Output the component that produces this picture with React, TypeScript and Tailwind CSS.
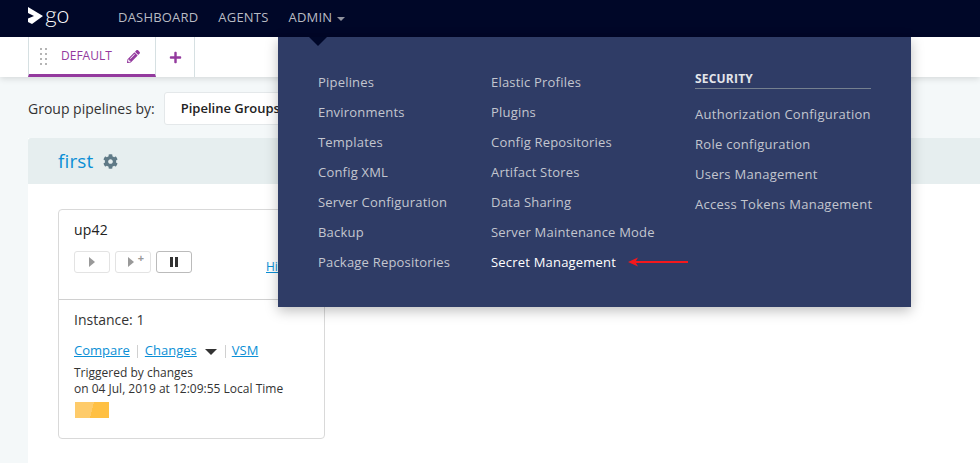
import { FaCog, FaPencilAlt, FaPlus } from 'react-icons/fa'

const col1 = ['Pipelines', 'Environments', 'Templates', 'Config XML', 'Server Configuration', 'Backup', 'Package Repositories']
const col2 = ['Elastic Profiles', 'Plugins', 'Config Repositories', 'Artifact Stores', 'Data Sharing', 'Server Maintenance Mode']
const col3 = ['Authorization Configuration', 'Role configuration', 'Users Management', 'Access Tokens Management']

function MenuItem({ label }: { label: string }) {
  return <li className="h-[30px] leading-[30px] whitespace-nowrap text-[#c3c6cf]">{label}</li>
}

function GoLogo() {
  return (
    <svg width="46" height="34" viewBox="0 0 46 34" className="block">
      <path d="M0 7 L15 16 L4 24 L0 22 L0 18.500 L6 16 L0 13 Z" fill="#fff" />
      <text x="17" y="23" fill="#fff" fontSize="23" fontFamily="'Lato', sans-serif" fontWeight="300">go</text>
    </svg>
  )
}

export default function App() {
  return (
    <div className="relative h-[463px] w-[980px] overflow-hidden bg-[#f4f8f9] font-['Open_Sans',sans-serif] text-[#333]">
      <header className="flex h-[37px] items-center bg-[#000728] pl-[28px]">
        <div className="self-start"><GoLogo /></div>
        <nav className="ml-[44px] -mt-[1px] flex gap-[20px] text-[13px] tracking-[0.2px] text-[#b9bbc3]">
          <span>DASHBOARD</span>
          <span>AGENTS</span>
          <span className="flex items-center gap-[5px]">
            ADMIN
            <span className="mt-[1px] h-0 w-0 border-x-[4px] border-t-[4px] border-x-transparent border-t-[#8f929e]" />
          </span>
        </nav>
      </header>

      <div className="flex h-[40px] bg-white pl-[28px] shadow-[0_2px_6px_rgba(0,0,0,0.12)]">
        <div className="flex w-[128px] items-center border-x border-x-[#d6e0e2] border-b-[3px] border-b-[#943a9e] pl-[11px] pt-[1px] text-[12px] text-[#943a9e]">
          <span className="grid grid-cols-2 gap-x-[3px] gap-y-[3px]">
            {[0, 1, 2, 3, 4, 5, 6, 7].map(i => <i key={i} className="block h-[2px] w-[2px] bg-[#b5b5b5]" />)}
          </span>
          <span className="ml-[14px]">DEFAULT</span>
          <FaPencilAlt size={13} className="ml-[15px]" />
        </div>
        <div className="flex w-[39px] items-center justify-center border-r border-r-[#d6e0e2]">
          <FaPlus size={13} color="#943a9e" />
        </div>
      </div>

      <main className="pl-[28px]">
        <div className="flex h-[61px] items-center pt-[2px] text-[14px]">
          <span>Group pipelines by:</span>
          <div className="ml-[9px] flex h-[33px] w-[150px] items-center rounded-[3px] border border-[#e4e8ea] bg-white pl-[16px] text-[13px] font-semibold text-[#222]">Pipeline Groups</div>
        </div>

        <section className="w-[952px] bg-white">
          <div className="flex h-[46px] items-center rounded-tl-[3px] bg-[#e6eeef] pl-[30px]">
            <span className="text-[19px] tracking-[0.1px] text-[#0b8fd6]">first</span>
            <FaCog size={15} color="#5f7a87" className="ml-[10px] mt-[1px]" />
          </div>
          <div className="h-[279px] px-[30px] pt-[25px]">
            <article className="h-[230px] w-[267px] rounded-[4px] border border-[#d9d9d9]">
              <div className="relative h-[90px] border-b border-b-[#d0d0d0] px-[15px] pt-[10px]">
                <div className="text-[14px] tracking-[0.2px] leading-[20px] text-[#222]">up42</div>
                <div className="mt-[11px] flex gap-[5px]">
                  <button className="flex h-[22px] w-[36px] items-center justify-center rounded-[3px] border border-[#e3e3e3]">
                    <span className="h-0 w-0 border-y-[5px] border-l-[6px] border-y-transparent border-l-[#999]" />
                  </button>
                  <button className="relative flex h-[22px] w-[36px] items-center justify-center rounded-[3px] border border-[#e3e3e3]">
                    <span className="-ml-[4px] h-0 w-0 border-y-[5px] border-l-[6px] border-y-transparent border-l-[#999]" />
                    <span className="absolute right-[6px] top-0 text-[11px] font-bold leading-[12px] text-[#999]">+</span>
                  </button>
                  <button className="flex h-[22px] w-[36px] items-center justify-center gap-[2px] rounded-[3px] border border-[#bbb]">
                    <i className="block h-[10px] w-[3px] bg-[#333]" />
                    <i className="block h-[10px] w-[3px] bg-[#333]" />
                  </button>
                </div>
                <a className="absolute left-[207px] top-[48px] text-[12px] text-[#0b8fd6] underline">History</a>
              </div>
              <div className="px-[15px] pt-[10px]">
                <div className="text-[14px] leading-[20px]">Instance: 1</div>
                <div className="mt-[11px] flex h-[20px] items-center text-[13px] text-[#0b8fd6]">
                  <a className="underline">Compare</a>
                  <i className="mx-[7px] h-[13px] w-px bg-[#d0d0d0]" />
                  <a className="underline">Changes</a>
                  <span className="ml-[8px] mr-[8px] mt-[2px] h-0 w-0 border-x-[6px] border-t-[6px] border-x-transparent border-t-[#333]" />
                  <i className="mr-[6px] h-[13px] w-px bg-[#d0d0d0]" />
                  <a className="underline">VSM</a>
                </div>
                <div className="mt-[4px] text-[12px] leading-[16px] text-[#333]">
                  <div>Triggered by changes</div>
                  <div>on 04 Jul, 2019 at 12:09:55 Local Time</div>
                </div>
                <div className="ml-[1px] mt-[5px] h-[16px] w-[34px] bg-[linear-gradient(105deg,#fecb6a_50%,#ffc043_50%)]" />
              </div>
            </article>
          </div>
        </section>
      </main>

      {/* admin dropdown */}
      <div className="absolute left-[278px] top-[37px] h-[270px] w-[633px] bg-[#2f3c66] pl-[40px] pt-[30px] text-[13px] tracking-[0.2px] shadow-[0_4px_12px_rgba(0,0,0,0.25)]">
        <span className="absolute left-[31px] top-0 h-0 w-0 border-x-[9px] border-t-[9px] border-x-transparent border-t-[#000728]" />
        <div className="flex">
          <ul className="w-[173px]">
            {col1.map(l => <MenuItem key={l} label={l} />)}
          </ul>
          <ul className="w-[204px]">
            {col2.map(l => <MenuItem key={l} label={l} />)}
            <li className="relative h-[30px] whitespace-nowrap leading-[30px] text-white">
              Secret Management
              <svg width="60" height="10" viewBox="0 0 60 10" className="absolute left-[137px] top-[10px]">
                <path d="M0 5 L10 0.500 L8 4 H60 V6 H8 L10 9.500 Z" fill="#f5181c" />
              </svg>
            </li>
          </ul>
          <div className="w-[176px]">
            <h4 className="mt-[3px] border-b border-b-[#75808f] text-[12px] font-bold leading-[18px] text-[#e3e5ea]">SECURITY</h4>
            <ul className="mt-[10px] tracking-[0.27px]">
              {col3.map(l => <MenuItem key={l} label={l} />)}
            </ul>
          </div>
        </div>
      </div>
    </div>
  )
}
